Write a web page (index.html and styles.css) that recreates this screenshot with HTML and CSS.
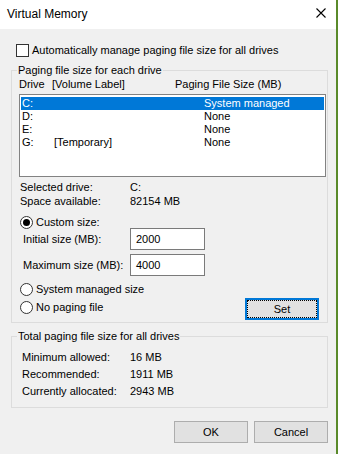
FILE: index.html
```html
<!DOCTYPE html>
<html>
<head>
<meta charset="utf-8">
<title>Virtual Memory</title>
<link rel="stylesheet" href="styles.css">
</head>
<body>
<div class="window">
  <div class="titlebar">
    <span class="title">Virtual Memory</span>
    <span class="close">
      <svg width="10" height="10" viewBox="0 0 10 10"><path d="M0.5 0.5 L9.5 9.5 M9.5 0.5 L0.5 9.5" stroke="#000" stroke-width="1.1" fill="none"/></svg>
    </span>
  </div>
  <div class="content">
    <div class="check-row">
      <span class="checkbox"></span>
      <span>Automatically manage paging file size for all drives</span>
    </div>

    <fieldset class="group group-drives">
      <legend>Paging file size for each drive</legend>
      <div class="list-head">
        <span>Drive</span><span>[Volume Label]</span><span>Paging File Size (MB)</span>
      </div>
      <div class="listbox">
        <div class="row selected"><span>C:</span><span></span><span>System managed</span></div>
        <div class="row"><span>D:</span><span></span><span>None</span></div>
        <div class="row"><span>E:</span><span></span><span>None</span></div>
        <div class="row"><span>G:</span><span>[Temporary]</span><span>None</span></div>
      </div>
      <div class="info">
        <span>Selected drive:</span><span>C:</span>
        <span>Space available:</span><span>82154 MB</span>
      </div>
      <div class="radio-row custom">
        <span class="radio checked"></span><span>Custom size:</span>
      </div>
      <div class="input-row">
        <span class="input-label">Initial size (MB):</span>
        <span class="textbox">2000</span>
      </div>
      <div class="input-row second">
        <span class="input-label">Maximum size (MB):</span>
        <span class="textbox">4000</span>
      </div>
      <div class="radio-row system">
        <span class="radio"></span><span>System managed size</span>
      </div>
      <div class="last-row">
        <div class="radio-row nopaging">
          <span class="radio"></span><span>No paging file</span>
        </div>
        <span class="button set">Set</span>
      </div>
    </fieldset>

    <fieldset class="group group-total">
      <legend>Total paging file size for all drives</legend>
      <div class="totals">
        <span>Minimum allowed:</span><span>16 MB</span>
        <span>Recommended:</span><span>1911 MB</span>
        <span>Currently allocated:</span><span>2943 MB</span>
      </div>
    </fieldset>

    <div class="buttons">
      <span class="button">OK</span>
      <span class="button">Cancel</span>
    </div>
  </div>
</div>
</body>
</html>
```

FILE: styles.css
```css
html, body {
  margin: 0;
  padding: 0;
}
body {
  width: 338px;
  height: 454px;
  overflow: hidden;
  font-family: "Liberation Sans", Arial, sans-serif;
  font-size: 11px;
  color: #000;
  background: #f0f0f0;
}
.window {
  width: 336px;
  height: 454px;
  border-right: 2px solid #5a8a2a;
  background: #f0f0f0;
}
.titlebar {
  height: 29px;
  background: #fff;
  display: flex;
  align-items: center;
  justify-content: space-between;
  padding-left: 7px;
  box-sizing: border-box;
}
.title {
  font-size: 12px;
  line-height: 14px;
  margin-top: -2px;
  color: #000;
}
.close {
  width: 10px;
  height: 10px;
  margin-right: 10px;
  margin-top: -3px;
  display: flex;
}
.content {
  padding-left: 11px;
  width: 317px;
}
.check-row {
  margin-top: 15px;
  height: 13px;
  display: flex;
  align-items: center;
  padding-left: 5px;
  line-height: 13px;
}
.checkbox {
  width: 11px;
  height: 11px;
  border: 1px solid #333;
  background: #fff;
  margin-right: 3px;
  flex: none;
}
.group {
  margin: 0;
  padding: 0;
  border: 1px solid #dcdcdc;
  min-width: 0;
  box-sizing: border-box;
  width: 317px;
}
.group legend {
  padding: 0 1px;
  margin-left: 5px;
  line-height: 13px;
  height: 13px;
}
.group-drives {
  margin-top: 7px;
  padding-bottom: 2px;
}
.list-head {
  display: grid;
  grid-template-columns: 33px 123px auto;
  padding-left: 7px;
  margin-top: 1px;
  line-height: 13px;
  height: 13px;
}
.listbox {
  margin: 3px 0 0 7px;
  width: 307px;
  height: 83px;
  box-sizing: border-box;
  border: 1px solid #828282;
  background: #fff;
  padding: 2px 1px 0 1px;
}
.row {
  display: grid;
  grid-template-columns: 32px 150px auto;
  height: 13px;
  line-height: 13px;
  padding-left: 1px;
}
.row.selected {
  background: #0078d7;
  color: #fff;
}
.info {
  display: grid;
  grid-template-columns: 110px auto;
  padding-left: 8px;
  margin-top: 3px;
  line-height: 14px;
}
.radio-row {
  display: flex;
  align-items: center;
  padding-left: 8px;
  height: 13px;
  line-height: 13px;
}
.radio {
  width: 11px;
  height: 11px;
  border: 1px solid #333;
  border-radius: 50%;
  background: #fff;
  margin-right: 3px;
  flex: none;
  display: flex;
  align-items: center;
  justify-content: center;
}
.radio.checked::after {
  content: "";
  width: 7px;
  height: 7px;
  border-radius: 50%;
  background: #000;
}
.radio-row.custom {
  margin-top: 8px;
  height: 12px;
}
.input-row {
  display: flex;
  align-items: center;
  height: 22px;
  padding-left: 11px;
}
.input-row.second {
  margin-top: 4px;
}
.input-label {
  width: 107px;
}
.textbox {
  width: 75px;
  height: 22px;
  box-sizing: border-box;
  border: 1px solid #7a7a7a;
  background: #fff;
  padding-left: 5px;
  line-height: 20px;
}
.radio-row.system {
  margin-top: 7px;
}
.last-row {
  display: flex;
  align-items: flex-start;
  justify-content: space-between;
  margin-top: 2px;
  padding-right: 8px;
  height: 22px;
}
.radio-row.nopaging {
  margin-top: 3px;
}
.button {
  width: 74px;
  height: 22px;
  box-sizing: border-box;
  border: 1px solid #adadad;
  background: #e1e1e1;
  display: flex;
  align-items: center;
  justify-content: center;
  line-height: 13px;
}
.button.set {
  border: 2px solid #0078d7;
  outline: 1px dotted #000;
  outline-offset: -3px;
}
.group-total {
  margin-top: 7px;
  padding-bottom: 7px;
}
.totals {
  display: grid;
  grid-template-columns: 108px auto;
  padding-left: 10px;
  margin-top: 6px;
  line-height: 17px;
}
.buttons {
  display: flex;
  justify-content: flex-end;
  gap: 6px;
  margin-top: 13px;
}
```
